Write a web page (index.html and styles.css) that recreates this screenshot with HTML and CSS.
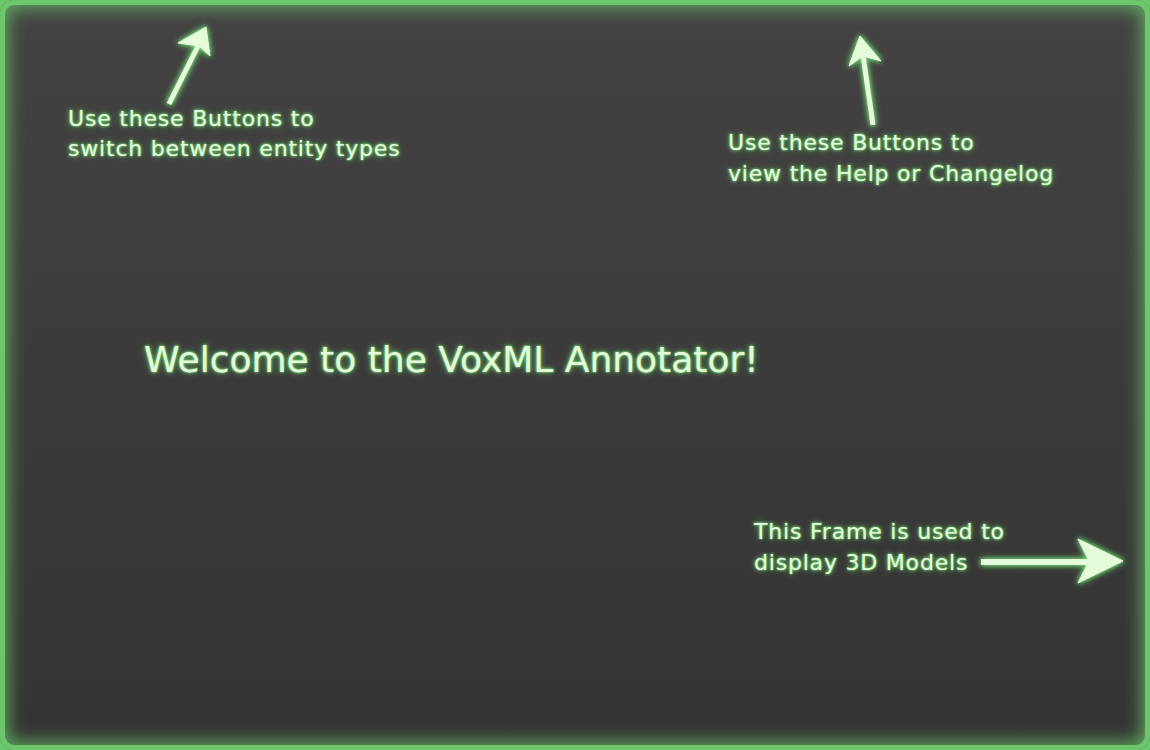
FILE: index.html
```html
<!DOCTYPE html>
<html>
<head>
<meta charset="utf-8">
<link rel="stylesheet" href="styles.css">
</head>
<body>
<main class="frame">
  <svg class="arrows" width="1150" height="750" viewBox="0 0 1150 750">
    <g class="arrow">
      <line x1="169" y1="104" x2="199" y2="44"/>
      <polygon points="206,27 210,56 199,46 178,43"/>
    </g>
    <g class="arrow">
      <line x1="873" y1="125" x2="863" y2="55"/>
      <polygon points="860,36 881,61 863,56 849,66"/>
    </g>
    <g class="arrow arrow-wide">
      <line x1="981" y1="562" x2="1092" y2="562"/>
      <polygon points="1123,561 1078,539 1089,561 1078,583"/>
    </g>
  </svg>
  <p class="note note-types">Use these Buttons to<br>switch between entity types</p>
  <p class="note note-help">Use these Buttons to<br>view the Help or Changelog</p>
  <h1 class="welcome">Welcome to the VoxML Annotator!</h1>
  <p class="note note-frame">This Frame is used to<br>display 3D Models</p>
</main>
</body>
</html>
```
FILE: styles.css
```css
html, body {
  margin: 0;
  padding: 0;
  background: #6cc66c;
}
.frame {
  position: relative;
  width: 1150px;
  height: 750px;
  box-sizing: border-box;
  border-radius: 14px;
  background: linear-gradient(to bottom, #444243 0%, #3c3b3b 50%, #333333 100%);
  box-shadow: inset 0 0 0 5px #6cc66c, inset 0 0 18px 8px rgba(108, 198, 108, 0.8);
  overflow: hidden;
}
.arrows {
  position: absolute;
  left: 0;
  top: 0;
}
.arrow {
  filter: drop-shadow(0 0 2px #7fd67f) drop-shadow(0 0 3px #5fb85f);
}
.arrow line {
  stroke: #e4fcd9;
  stroke-width: 5;
}
.arrow-wide line {
  stroke-width: 6;
}
.arrow polygon {
  fill: #e4fcd9;
  stroke: #e4fcd9;
  stroke-width: 1;
  stroke-linejoin: round;
}
.note, .welcome {
  position: absolute;
  margin: 0;
  color: #e4fcd9;
  text-shadow: 0 0 3px #7fd67f, 0 0 2px #5fb85f, 0 0 6px #5fb85f;
  white-space: nowrap;
}
.note {
  font-family: "DejaVu Sans", sans-serif;
  font-size: 22px;
  line-height: 30px;
  letter-spacing: 0.8px;
}
.note-types { left: 68px; top: 104px; }
.note-help { left: 728px; top: 127px; line-height: 31px; }
.note-frame { left: 754px; top: 516px; line-height: 31px; }
.welcome {
  left: 144px;
  top: 335px;
  font-family: "DejaVu Sans", sans-serif;
  font-weight: normal;
  font-size: 36px;
  line-height: 50px;
}
```
